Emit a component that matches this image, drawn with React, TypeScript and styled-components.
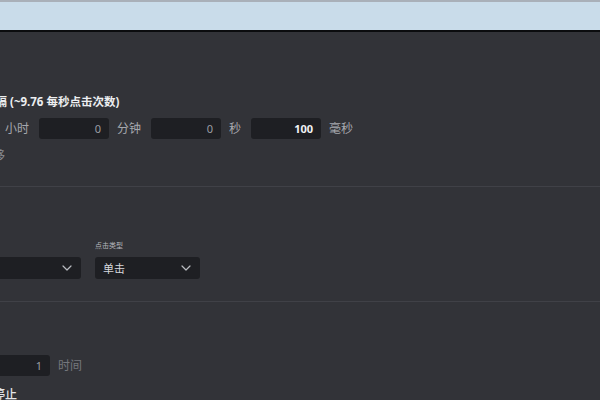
import React from "react";
import styled, { createGlobalStyle } from "styled-components";

const GlobalStyle = createGlobalStyle`
  html, body {
    margin: 0;
    padding: 0;
    width: 600px;
    height: 400px;
    overflow: hidden;
    background: #323338;
    font-family: "Noto Sans", "Noto Sans CJK SC", sans-serif;
  }
`;

const Window = styled.div`
  width: 600px;
  height: 400px;
  overflow: hidden;
  background: #323338;
`;

const TitleBar = styled.div`
  height: 28px;
  background: #c9dcea;
  border-top: 2px solid #a9b0b9;
  border-bottom: 2px solid #0b0c0e;
`;

const Content = styled.div`
  margin-left: -67px;
`;

const Section = styled.section<{ $top: number; $bottom: number }>`
  padding: ${(p) => p.$top}px 0 ${(p) => p.$bottom}px;
  border-bottom: 1px solid #404147;
  &:last-child {
    border-bottom: none;
  }
`;

const SectionTitle = styled.h2<{ $gap: number }>`
  margin: 0 0 ${(p) => p.$gap}px;
  font-size: 14px;
  line-height: 20px;
  font-weight: 700;
  color: #eceef0;
  width: 60px;
  white-space: nowrap;
  overflow: hidden;
`;

const Heading = styled.div`
  margin-left: 5px;
  font-size: 11.5px;
  line-height: 18px;
  font-weight: 700;
  color: #eceef0;
  white-space: nowrap;
`;

const Row = styled.div<{ $top?: number }>`
  display: flex;
  align-items: center;
  margin-top: ${(p) => p.$top ?? 0}px;
`;

const NumberBox = styled.div<{ $w: number; $strong?: boolean }>`
  width: ${(p) => p.$w}px;
  height: 21px;
  box-sizing: border-box;
  padding-right: 8px;
  border-radius: 3px;
  background: #1e1f23;
  display: flex;
  align-items: center;
  justify-content: flex-end;
  font-size: 11px;
  font-weight: ${(p) => (p.$strong ? 700 : 400)};
  color: ${(p) => (p.$strong ? "#f2f3f5" : "#9b9da3")};
  margin-right: 8px;
  flex: none;
`;

const Unit = styled.span<{ $dim?: boolean }>`
  font-size: 12px;
  line-height: 18px;
  color: ${(p) => (p.$dim ? "#75777d" : "#a6a8ae")};
  margin-right: 10px;
  white-space: nowrap;
`;

const Hint = styled.div`
  margin-top: 8px;
  font-size: 12px;
  line-height: 18px;
  color: #8a8c92;
  white-space: nowrap;
`;

const Field = styled.div<{ $w: number }>`
  width: ${(p) => p.$w}px;
  margin-right: 14px;
  flex: none;
`;

const FieldLabel = styled.div`
  font-size: 7px;
  line-height: 10px;
  color: #b4b6bb;
  margin-bottom: 6px;
  white-space: nowrap;
`;

const Select = styled.div`
  height: 22px;
  box-sizing: border-box;
  padding: 0 9px 0 8px;
  border-radius: 3px;
  background: #1e1f23;
  display: flex;
  align-items: center;
  justify-content: space-between;
  font-size: 11px;
  color: #d6d8dc;
`;

const Option = styled.div`
  margin-top: 10px;
  font-size: 12px;
  line-height: 18px;
  font-weight: 500;
  color: #e4e5e8;
  white-space: nowrap;
`;

const Chevron = () => (
  <svg width="10" height="6" viewBox="0 0 10 6" fill="none">
    <path d="M1 1l4 4 4-4" stroke="#b9bbc0" strokeWidth="1.2" strokeLinecap="round" strokeLinejoin="round" />
  </svg>
);

export default function App() {
  return (
    <Window>
      <GlobalStyle />
      <TitleBar />
      <Content>
        <Section $top={18} $bottom={21}>
          <SectionTitle $gap={23}>点击间隔</SectionTitle>
          <Heading>鼠标点击间隔 (~9.76 每秒点击次数)</Heading>
          <Row $top={7}>
            <NumberBox $w={64}>0</NumberBox>
            <Unit>小时</Unit>
            <NumberBox $w={70}>0</NumberBox>
            <Unit>分钟</Unit>
            <NumberBox $w={70}>0</NumberBox>
            <Unit>秒</Unit>
            <NumberBox $w={70} $strong>100</NumberBox>
            <Unit>毫秒</Unit>
          </Row>
          <Hint>启用随机偏移</Hint>
        </Section>

        <Section $top={18} $bottom={22}>
          <SectionTitle $gap={16}>点击选项</SectionTitle>
          <Row>
            <Field $w={148}>
              <FieldLabel>鼠标按键</FieldLabel>
              <Select>
                <span>左键</span>
                <Chevron />
              </Select>
            </Field>
            <Field $w={105}>
              <FieldLabel>点击类型</FieldLabel>
              <Select>
                <span>单击</span>
                <Chevron />
              </Select>
            </Field>
          </Row>
        </Section>

        <Section $top={18} $bottom={0}>
          <SectionTitle $gap={15}>点击重复</SectionTitle>
          <Row>
            <NumberBox $w={117}>1</NumberBox>
            <Unit $dim>时间</Unit>
          </Row>
          <Option>重复直到被停止</Option>
        </Section>
      </Content>
    </Window>
  );
}
